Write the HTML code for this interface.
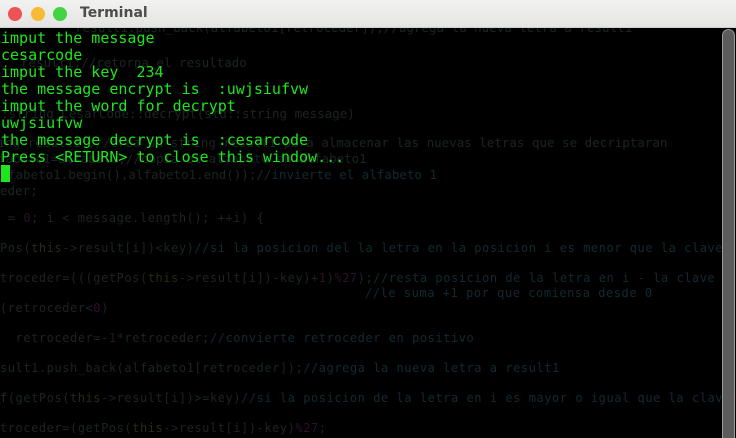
<!DOCTYPE html>
<html><head><meta charset="utf-8"><style>
html,body{margin:0;padding:0;width:736px;height:438px;overflow:hidden;background:#000}
#wrap{position:absolute;left:0;top:0;width:736px;height:438px;overflow:hidden}
#tb{position:absolute;left:0;top:0;width:736px;height:28px;background:linear-gradient(#f2f2f0,#e4e4e2);border-bottom:1px solid #cfcfcf;box-sizing:border-box}
.b{position:absolute;top:7px;width:14px;height:14px;border-radius:50%}
#t{position:absolute;left:80px;top:5px;font:bold 14px "DejaVu Sans","Liberation Sans",sans-serif;color:#4d4d4d}
.bg{position:absolute;font:12px "DejaVu Sans Mono",monospace;letter-spacing:0.55px;color:#1c2424;white-space:pre}
.up{font-size:12.5px;letter-spacing:0}
.c{color:#142a30}.k{color:#2a2a14}.n{color:#2a1428}
.g{position:absolute;left:1px;font:15px "DejaVu Sans Mono",monospace;color:#1ee61e;white-space:pre;line-height:17px}
#sb{position:absolute;left:722px;top:29px;width:13px;height:420px;background:#5c5c5c;border:1px solid #9a9a9a;border-radius:7px 7px 0 0;box-sizing:border-box}
</style></head><body><div id="wrap">
<div class="bg up" style="left:0;top:20px">          result1.push_back(alfabeto1[retroceder]);//agrega la nueva letra a result1</div>
<div class="bg up" style="left:21px;top:55px">result1;//retorna el resultado</div>
<div class="bg up" style="left:-29px;top:106px">std::string CesarCode::decrypt(std::string message)</div>
<div class="bg up" style="left:-40px;top:135px">  string result1 ;//crea un string result1 para almacenar las nuevas letras que se decriptaran</div>
<div class="bg up" style="left:-130px;top:151px">  vector&lt;char&gt; alfabeto1=alfabeto;//copia el alfabeto en alfabeto1</div>
<div class="bg up" style="left:8px;top:167px">fabeto1.begin(),alfabeto1.end());<span class="c">//invierte el alfabeto 1</span></div>
<div class="bg up" style="left:0;top:183px">eder;</div>
<div class="bg" style="left:0;top:211px"> = <span class="n">0</span>; i &lt; message.length(); ++i) {</div>
<div class="bg" style="left:0;top:241px">Pos(<span class="k">this</span>-&gt;result[i])&lt;key)<span class="c">//si la posicion del la letra en la posicion i es menor que la clave</span></div>
<div class="bg" style="left:0;top:271px">troceder=(((getPos(<span class="k">this</span>-&gt;result[i])-key)+<span class="n">1</span>)<span class="n">%27</span>);<span class="c">//resta posicion de la letra en i - la clave</span></div>
<div class="bg c" style="left:365px;top:286px">//le suma +1 por que comiensa desde 0</div>
<div class="bg" style="left:0;top:301px">(retroceder&lt;<span class="n">0</span>)</div>
<div class="bg" style="left:0;top:331px">  retroceder=-<span class="n">1</span>*retroceder;<span class="c">//convierte retroceder en positivo</span></div>
<div class="bg" style="left:0;top:361px">sult1.push_back(alfabeto1[retroceder]);<span class="c">//agrega la nueva letra a result1</span></div>
<div class="bg" style="left:0;top:391px"><span class="k">f</span>(getPos(<span class="k">this</span>-&gt;result[i])&gt;=key)<span class="c">//si la posicion de la letra en i es mayor o igual que la clave</span></div>
<div class="bg" style="left:0;top:421px">troceder=(getPos(<span class="k">this</span>-&gt;result[i])-key)<span class="n">%27</span>;</div>
<div class="g" style="top:30px">imput the message
cesarcode
imput the key  234
the message encrypt is  :uwjsiufvw
imput the word for decrypt
uwjsiufvw
the message decrypt is  :cesarcode
Press &lt;RETURN&gt; to close this window...</div>
<div style="position:absolute;left:1px;top:165px;width:9px;height:17px;background:#1ee61e"></div>
<div id="sb"></div>
<div id="tb">
<div class="b" style="left:8px;background:#ec5352"></div>
<div class="b" style="left:31px;background:#f6bb34"></div>
<div class="b" style="left:53px;background:#43d444"></div>
<div id="t">Terminal</div>
</div>
</div></body></html>
